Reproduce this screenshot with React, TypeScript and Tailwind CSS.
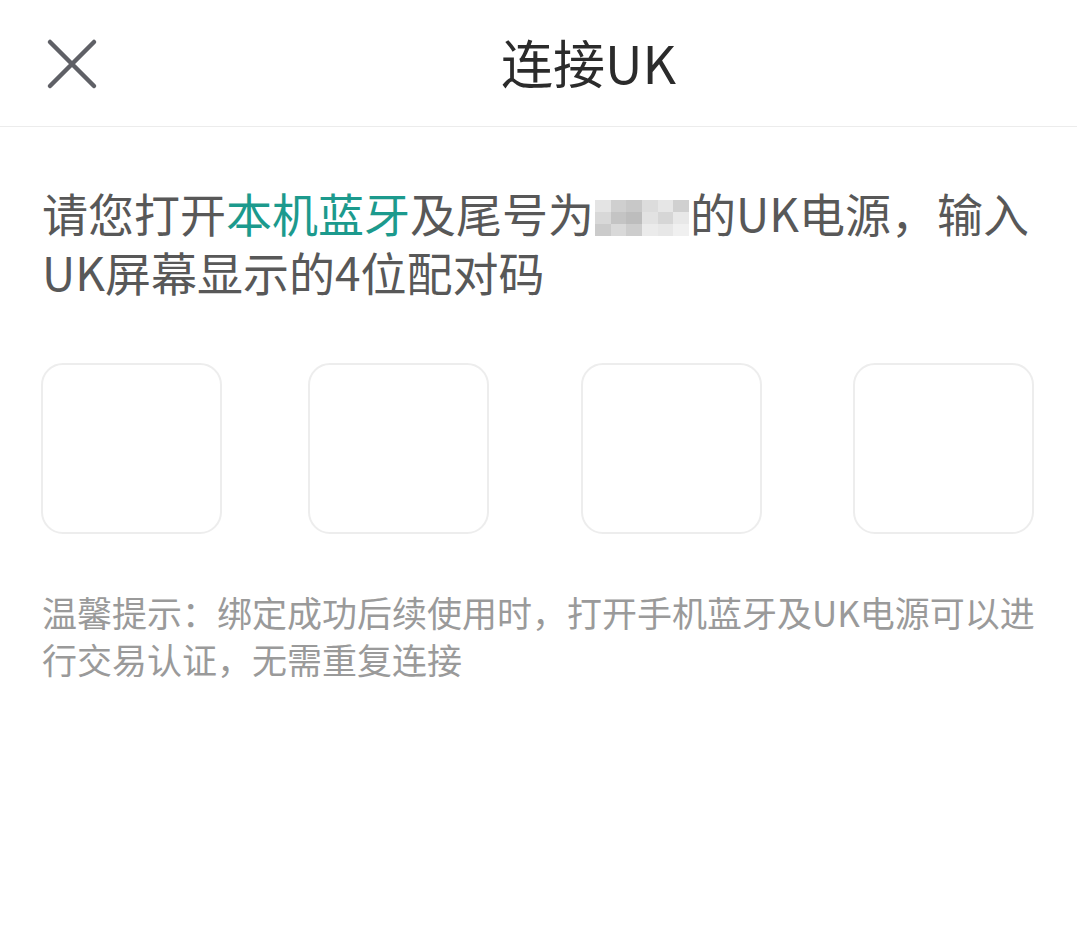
import React from "react";

const font = { fontFamily: '"Noto Sans CJK SC", "Noto Sans", sans-serif' };

function Blur() {
  const cells = [
    "#e4e4e4", "#cfcfcf", "#c8c8c8", "#dcdcdc", "#e6e6e6", "#d0d0d0",
    "#d8d8d8", "#c4c4c4", "#bdbdbd", "#e2e2e2", "#d6d6d6", "#e8e8e8",
    "#cbcbcb", "#d9d9d9", "#cdcdcd", "#ebebeb", "#e7e7e7", "#f0f0f0",
  ];
  return (
    <span className="inline-block align-middle w-[94px] h-[36px] mx-[1px] -mt-[4px]">
      <span className="grid grid-cols-6 grid-rows-3 w-full h-full">
        {cells.map((c, i) => (
          <span key={i} style={{ backgroundColor: c }} />
        ))}
      </span>
    </span>
  );
}

function CodeBox({ className = "" }: { className?: string }) {
  return <div className={`w-[181px] h-[171px] rounded-[22px] border-2 border-[#ededed] bg-white ${className}`} />;
}

export default function App() {
  return (
    <div className="w-[1077px] h-[935px] bg-white" style={font}>
      <div className="relative h-[127px] border-b border-[#ececec] flex items-center justify-center">
        <svg className="absolute left-[46px] top-[38px]" width="52" height="52" viewBox="0 0 52 52">
          <path d="M4 4 L48 48 M48 4 L4 48" stroke="#5f6066" strokeWidth="4.5" strokeLinecap="round" />
        </svg>
        <div className="text-[52px] leading-none text-[#2b2b2b] -mt-[2px] ml-[100px]">连接UK</div>
      </div>
      <div className="pl-[42px] pr-[40px] pt-[56px]">
        <p className="text-[46px] leading-[59px] text-[#585858] -mr-[10px]">
          请您打开<span className="text-[#1c9a8d]">本机蓝牙</span>及尾号为<Blur />的UK电源，输入UK屏幕显示的4位配对码
        </p>
        <div className="mt-[62px] flex -ml-[1px]">
          <CodeBox />
          <CodeBox className="ml-[86px]" />
          <CodeBox className="ml-[92px]" />
          <CodeBox className="ml-[91px]" />
        </div>
        <p className="mt-[54px] text-[35px] leading-[47px] text-[#9a9a9a] -mr-[6px]">
          温馨提示：绑定成功后续使用时，打开手机蓝牙及UK电源可以进行交易认证，无需重复连接
        </p>
      </div>
    </div>
  );
}
